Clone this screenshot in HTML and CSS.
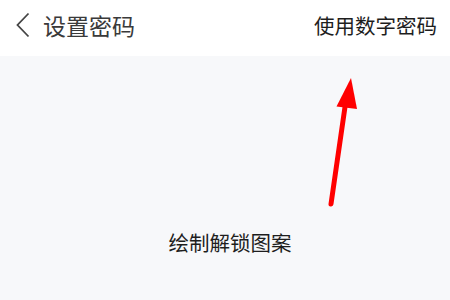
FILE: index.html
```html
<!DOCTYPE html>
<html lang="zh">
<head>
<meta charset="utf-8">
<link rel="stylesheet" href="styles.css">
</head>
<body>
<div class="page">
  <header class="bar">
    <div class="left">
      <svg class="back" width="16" height="26" viewBox="0 0 16 26"><path d="M13.5 1.5 L2.5 13 L13.5 24.5" fill="none" stroke="#444" stroke-width="1.8"/></svg>
      <span class="title">设置密码</span>
    </div>
    <span class="action">使用数字密码</span>
  </header>
  <main class="content">
    <p class="hint">绘制解锁图案</p>
  </main>
  <svg class="arrow" width="450" height="300" viewBox="0 0 450 300">
    <line x1="331" y1="204" x2="346" y2="100" stroke="#ff0000" stroke-width="5" stroke-linecap="round"/>
    <polygon points="351,78 336.5,106.5 357,109" fill="#ff0000"/>
  </svg>
</div>
</body>
</html>
```
FILE: styles.css
```css
html, body { margin: 0; padding: 0; }
body { font-family: "Noto Sans CJK SC", "Noto Sans", sans-serif; background: #f7f8fa; }
.page { position: relative; width: 450px; height: 300px; display: flex; flex-direction: column; overflow: hidden; }
.bar { height: 56px; box-sizing: border-box; padding: 0 13px 6px 15px; background: #fff; display: flex; align-items: center; justify-content: space-between; }
.left { display: flex; align-items: center; }
.back { display: block; margin-right: 12px; }
.title { font-size: 23px; color: #3a3a3a; line-height: 1; }
.action { font-size: 20.5px; color: #1e1e1e; line-height: 1; }
.content { flex: 1; background: #f7f8fa; display: flex; justify-content: center; padding-left: 10px; }
.hint { margin: 176px 0 0; font-size: 20.5px; color: #1e1e1e; line-height: 20px; }
.arrow { position: absolute; left: 0; top: 0; pointer-events: none; }
```
